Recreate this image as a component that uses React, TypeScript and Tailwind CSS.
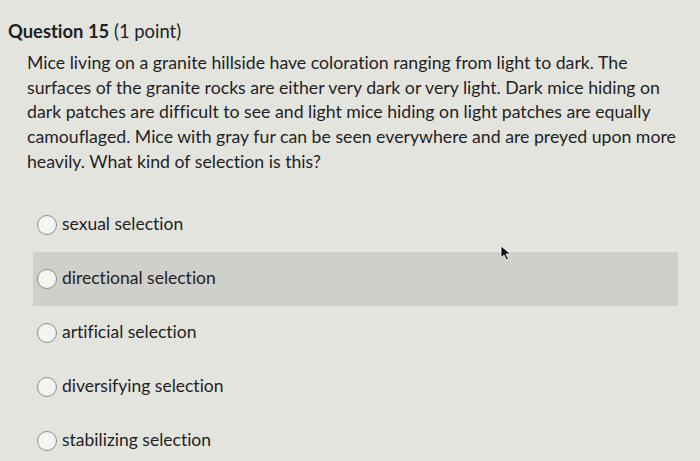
const options = [
  "sexual selection",
  "directional selection",
  "artificial selection",
  "diversifying selection",
  "stabilizing selection",
]

function Radio() {
  return <span className="w-[20px] h-[20px] rounded-full border-[1.5px] border-[#8a8a88] bg-[#f4f4f0] shrink-0" />
}

export default function App() {
  return (
    <div
      className="relative w-[700px] h-[461px] overflow-hidden bg-[#e4e4df] text-[#1f1f1f] [font-variant-ligatures:none]"
      style={{ fontFamily: "Lato, 'Open Sans', sans-serif" }}
    >
      <div className="pl-[8px] pt-[19px] text-[18.4px] leading-[24px]">
        <span className="font-bold">Question 15</span> (1 point)
      </div>

      <p className="ml-[27px] w-[655px] mt-[8px] text-[17.7px] leading-[24.7px]">
        Mice living on a granite hillside have coloration ranging from light to dark. The surfaces of the granite rocks are either very dark or very light. Dark mice hiding on dark patches are difficult to see and light mice hiding on light patches are equally camouflaged. Mice with gray fur can be seen everywhere and are preyed upon more heavily. What kind of selection is this?
      </p>

      <div className="mt-[23px] ml-[33px] w-[645px] flex flex-col">
        {options.map((o, i) => (
          <div
            key={o}
            className={`h-[54px] flex items-center gap-[5px] pl-[4px] ${i === 1 ? "bg-[#cfcfcb]" : ""}`}
          >
            <Radio />
            <span className="text-[17.5px]">{o}</span>
          </div>
        ))}
      </div>

      {/* mouse cursor */}
      <svg className="absolute left-[500px] top-[245px]" width="12" height="16" viewBox="0 0 12 16">
        <path d="M1 1 L1 13 L4 10 L6.5 15 L8.5 14 L6 9 L10.5 9 Z" fill="#111" stroke="#fff" strokeWidth="0.8" />
      </svg>
    </div>
  )
}
